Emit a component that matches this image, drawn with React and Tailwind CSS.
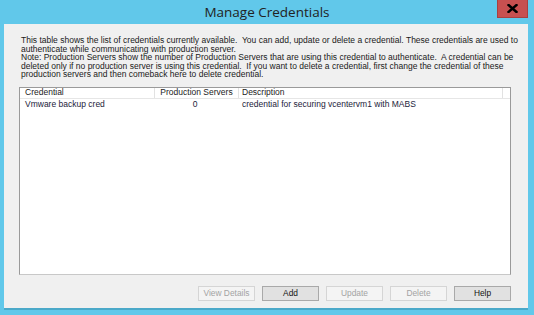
import React from 'react';

// Manage Credentials dialog (Windows Server 2012 style)
const rows = [
    { name: 'Vmware backup cred', servers: 0, desc: 'credential for securing vcentervm1 with MABS' },
];

const Btn = ({ children, disabled }) => (
    <button
        disabled={disabled}
        className={`w-[57px] h-[15px] flex items-center justify-center text-[8.4px] leading-none border ${
            disabled
                ? 'bg-[#f4f4f4] border-[#d5d5d5] text-[#a3a3a3]'
                : 'bg-[#e1e1e1] border-[#a9a9a9] text-[#111]'
        }`}
    >
        {children}
    </button>
);

export default function App() {
    return (
        <div
            className="w-[534px] h-[315px] bg-[#61c8ea] flex flex-col overflow-hidden"
            style={{ fontFamily: '"Liberation Sans", Arial, sans-serif' }}
        >
            {/* Title bar */}
            <div className="relative h-[24px] flex items-center justify-center shrink-0">
                <span className="text-[13.5px] text-[#222] pt-[1px]" style={{ fontFamily: '"Open Sans", "Noto Sans", sans-serif' }}>
                    Manage Credentials
                </span>
                <div className="absolute right-[6px] top-0 w-[31px] h-[18px] bg-[#c75050] border border-[#a84040] border-t-0 flex items-center justify-center">
                    <svg width="11" height="9" viewBox="0 0 11 9">
                        <path d="M1.5 1L9.5 8M9.5 1L1.5 8" stroke="#000" strokeWidth="2.4" strokeLinecap="square" />
                    </svg>
                </div>
            </div>

            {/* Panel */}
            <div className="ml-[4px] mr-[6px] h-[286px] bg-[#f0f0f0] border-b-2 border-[#4ba9c9] flex flex-col pl-[15px] pr-[17px]">
                <div className="mt-[12px] ml-[2px] text-[8.5px] leading-[8.5px] text-[#1a1a1a] whitespace-nowrap">
                    <p>This table shows the list of credentials currently available.&nbsp; You can add, update or delete a credential. These credentials are used to</p>
                    <p>authenticate while communicating with production server.</p>
                    <p>Note: Production Servers show the number of Production Servers that are using this credential to authenticate.&nbsp; A credential can be</p>
                    <p>deleted only if no production server is using this credential.&nbsp; If you want to delete a credential, first change the credential of these</p>
                    <p>production servers and then comeback here to delete credential.</p>
                </div>

                {/* Table */}
                <div className="mt-[8px] w-[492px] h-[188px] bg-white border border-[#9a9a9a] border-b-[#c8c8c8] flex flex-col text-[8.5px] leading-none">
                    <div className="flex h-[11px] border-b border-[#e6e6e6] text-[#222]">
                        <div className="w-[135px] pl-[5px] flex items-center border-r border-[#e2e2e2]">Credential</div>
                        <div className="w-[84px] flex items-center justify-center border-r border-[#e2e2e2]">Production Servers</div>
                        <div className="w-[264px] pl-[3px] flex items-center border-r border-[#e2e2e2]">Description</div>
                        <div className="flex-1" />
                    </div>
                    {rows.map((r) => (
                        <div key={r.name} className="flex h-[12px] items-center text-[#1c1c3a]">
                            <div className="w-[135px] pl-[5px]">{r.name}</div>
                            <div className="w-[84px] text-center pr-[4px]">{r.servers}</div>
                            <div className="w-[264px] pl-[3px]">{r.desc}</div>
                        </div>
                    ))}
                </div>

                {/* Buttons */}
                <div className="mt-[11px] flex justify-end gap-[7px]">
                    <Btn disabled>View Details</Btn>
                    <Btn>Add</Btn>
                    <Btn disabled>Update</Btn>
                    <Btn disabled>Delete</Btn>
                    <Btn>Help</Btn>
                </div>
            </div>
        </div>
    );
}
